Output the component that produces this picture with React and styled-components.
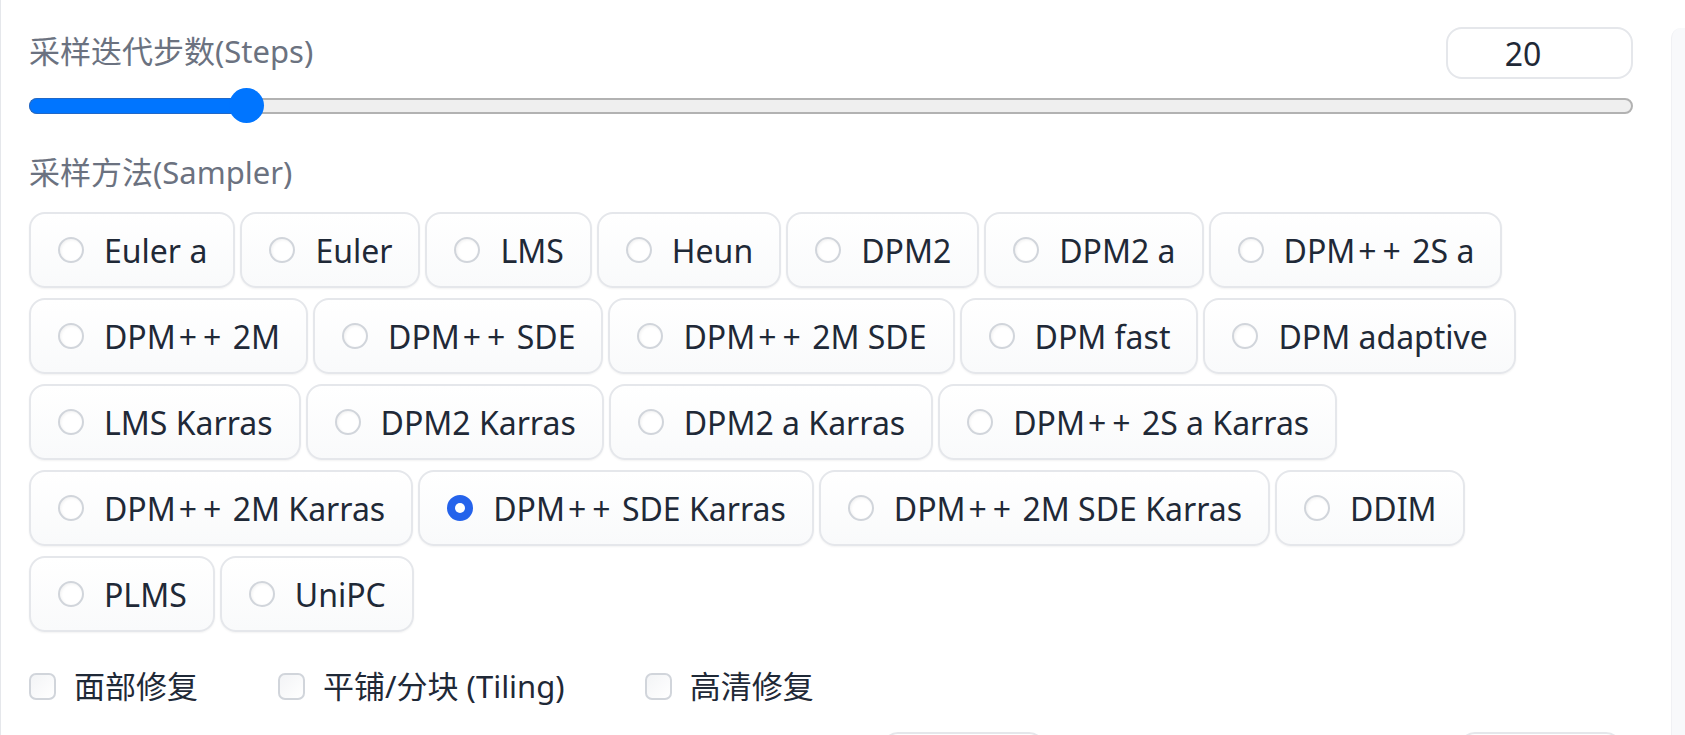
import { useState } from 'react';
import styled, { createGlobalStyle } from 'styled-components';

const GlobalStyle = createGlobalStyle`
  html, body {
    margin: 0;
    padding: 0;
    height: 735px;
    overflow: hidden;
    background: #ffffff;
  }
  body {
    font-family: "Noto Sans", "Noto Sans CJK SC", sans-serif;
    color: #1f2937;
  }
`;

const Page = styled.div`
  display: flex;
  align-items: flex-start;
  width: 1685px;
  height: 735px;
  overflow: hidden;
`;

const MainPanel = styled.div`
  flex: 1;
  min-width: 0;
  height: 735px;
  border-left: 1px solid #e5e7eb;
  padding: 27px 38px 0 28px;
  box-sizing: border-box;
`;

const SidePanel = styled.div`
  width: 13px;
  height: 707px;
  flex-shrink: 0;
  margin-top: 28px;
  background: #f8f9fb;
  border-top-left-radius: 10px;
  border-left: 1px solid #f0f1f4;
`;

const HeaderRow = styled.div`
  display: flex;
  justify-content: space-between;
  align-items: flex-start;
`;

const Label = styled.div`
  font-size: 31px;
  line-height: 36px;
  color: #6b7280;
  padding-top: ${p => p.$top || 0}px;
`;

const NumberBox = styled.div`
  box-sizing: border-box;
  width: 187px;
  height: 52px;
  border: 2px solid #e5e7eb;
  border-radius: 16px;
  background: #fff;
  display: flex;
  align-items: center;
  justify-content: center;
  padding-right: 33px;
  font-size: 32px;
  color: #1f2937;
`;

const Slider = styled.div`
  position: relative;
  height: 35px;
  margin-top: 9px;
  display: flex;
  align-items: center;
`;

const Track = styled.div`
  box-sizing: border-box;
  width: 100%;
  height: 16px;
  border-radius: 8px;
  background: #efefef;
  border: 2px solid #b2b2b2;
`;

const Fill = styled.div`
  position: absolute;
  left: 0;
  top: 9.5px;
  height: 16px;
  box-sizing: border-box;
  border-radius: 8px 0 0 8px;
  background: #0075ff;
  border: 1px solid #2068c8;
  border-right: none;
`;

const Thumb = styled.div`
  position: absolute;
  top: 0;
  width: 35px;
  height: 35px;
  border-radius: 50%;
  background: #0075ff;
`;

const OptionGroup = styled.div`
  display: flex;
  flex-wrap: wrap;
  column-gap: 5px;
  row-gap: 10px;
  margin-top: 22px;
`;

const Option = styled.label`
  box-sizing: border-box;
  height: 76px;
  display: flex;
  align-items: center;
  gap: 20px;
  padding: 0 26px 0 27px;
  border: 2px solid #e5e7eb;
  border-radius: 16px;
  background: linear-gradient(to bottom, #ffffff, #f9fafb);
  box-shadow: 0 1px 2px rgba(0, 0, 0, 0.05);
  font-size: 32px;
  color: #1f2937;
  white-space: nowrap;
  cursor: pointer;
`;

const Plus = styled.span`
  padding: 0 3px;
`;

const Dot = styled.span`
  box-sizing: border-box;
  width: 26px;
  height: 26px;
  border-radius: 50%;
  flex-shrink: 0;
  border: 2px solid ${p => (p.$checked ? '#2563eb' : '#d1d5db')};
  background: ${p => (p.$checked ? '#2563eb' : '#fff')};
  box-shadow: ${p => (p.$checked ? 'none' : 'inset 1px 1px 3px rgba(0,0,0,0.06)')};
  display: flex;
  align-items: center;
  justify-content: center;
  &::after {
    content: '';
    display: ${p => (p.$checked ? 'block' : 'none')};
    width: 10px;
    height: 10px;
    border-radius: 50%;
    background: #fff;
  }
`;

const CheckRow = styled.div`
  display: flex;
  align-items: center;
  gap: 80px;
  margin-top: 36px;
  height: 36px;
`;

const CheckItem = styled.label`
  display: flex;
  align-items: center;
  gap: 18px;
  font-size: 31px;
  line-height: 36px;
  color: #1f2937;
  cursor: pointer;
`;

const Box = styled.span`
  box-sizing: border-box;
  width: 27px;
  height: 27px;
  border-radius: 7px;
  border: 2px solid #d1d5db;
  background: linear-gradient(to bottom right, #f3f4f6, #ffffff);
`;

const NextRow = styled.div`
  display: flex;
  margin-top: 28px;
  padding-right: 11px;
`;

const NextColumn = styled.div`
  display: flex;
  justify-content: flex-end;
  flex: ${p => p.$grow};
`;

const NextBox = styled.div`
  box-sizing: border-box;
  width: 163px;
  height: 52px;
  border: 2px solid #e5e7eb;
  border-radius: 16px;
  background: #fff;
`;

const samplers = [
  'Euler a', 'Euler', 'LMS', 'Heun', 'DPM2', 'DPM2 a', 'DPM++ 2S a',
  'DPM++ 2M', 'DPM++ SDE', 'DPM++ 2M SDE', 'DPM fast', 'DPM adaptive',
  'LMS Karras', 'DPM2 Karras', 'DPM2 a Karras', 'DPM++ 2S a Karras',
  'DPM++ 2M Karras', 'DPM++ SDE Karras', 'DPM++ 2M SDE Karras', 'DDIM',
  'PLMS', 'UniPC',
];

const checks = ['面部修复', '平铺/分块 (Tiling)', '高清修复'];

// the "+" glyphs sit wider apart in the original font
const SamplerName = ({ name }) =>
  name.split(/(\+)/).map((part, i) =>
    part === '+' ? <Plus key={i}>+</Plus> : part,
  );

export default function App() {
  const [steps] = useState(20);
  const [sampler, setSampler] = useState('DPM++ SDE Karras');
  const frac = (steps - 1) / 149;
  const thumbLeft = `calc(${frac} * (100% - 35px))`;

  return (
    <>
      <GlobalStyle />
      <Page>
        <MainPanel>
          <HeaderRow>
            <Label $top={6}>采样迭代步数(Steps)</Label>
            <NumberBox>{steps}</NumberBox>
          </HeaderRow>
          <Slider>
            <Track />
            <Fill style={{ width: `calc(${thumbLeft} + 17px)` }} />
            <Thumb style={{ left: thumbLeft }} />
          </Slider>
          <Label $top={31}>采样方法(Sampler)</Label>
          <OptionGroup>
            {samplers.map(name => (
              <Option key={name} onClick={() => setSampler(name)}>
                <Dot $checked={sampler === name} />
                <span>
                  <SamplerName name={name} />
                </span>
              </Option>
            ))}
          </OptionGroup>
          <CheckRow>
            {checks.map(text => (
              <CheckItem key={text}>
                <Box />
                {text}
              </CheckItem>
            ))}
          </CheckRow>
          <NextRow>
            <NextColumn $grow={1017}>
              <NextBox />
            </NextColumn>
            <NextColumn $grow={577}>
              <NextBox />
            </NextColumn>
          </NextRow>
        </MainPanel>
        <SidePanel />
      </Page>
    </>
  );
}
